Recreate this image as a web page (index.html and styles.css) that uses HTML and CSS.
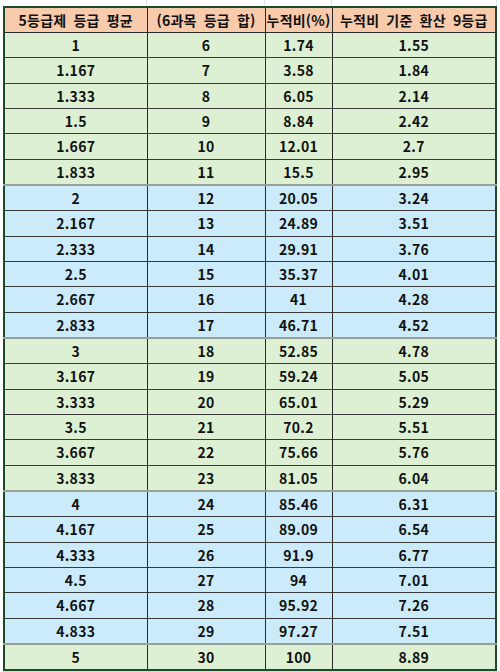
FILE: index.html
```html
<!DOCTYPE html>
<html lang="ko">
<head>
<meta charset="utf-8">
<link rel="stylesheet" href="styles.css">
</head>
<body>
<div class="sheet">
  <div class="ghost ghost-top"><span></span><span></span><span></span><span></span></div>
  <table class="grade">
    <colgroup><col class="c1"><col class="c2"><col class="c3"><col class="c4"></colgroup>
    <thead>
      <tr><th>5등급제 등급 평균</th><th>(6과목 등급 합)</th><th>누적비(%)</th><th>누적비 기준 환산 9등급</th></tr>
    </thead>
    <tbody>
      <tr class="g"><td>1</td><td>6</td><td>1.74</td><td>1.55</td></tr>
      <tr class="g"><td>1.167</td><td>7</td><td>3.58</td><td>1.84</td></tr>
      <tr class="g"><td>1.333</td><td>8</td><td>6.05</td><td>2.14</td></tr>
      <tr class="g"><td>1.5</td><td>9</td><td>8.84</td><td>2.42</td></tr>
      <tr class="g"><td>1.667</td><td>10</td><td>12.01</td><td>2.7</td></tr>
      <tr class="g"><td>1.833</td><td>11</td><td>15.5</td><td>2.95</td></tr>
      <tr class="b sw"><td>2</td><td>12</td><td>20.05</td><td>3.24</td></tr>
      <tr class="b"><td>2.167</td><td>13</td><td>24.89</td><td>3.51</td></tr>
      <tr class="b"><td>2.333</td><td>14</td><td>29.91</td><td>3.76</td></tr>
      <tr class="b"><td>2.5</td><td>15</td><td>35.37</td><td>4.01</td></tr>
      <tr class="b"><td>2.667</td><td>16</td><td>41</td><td>4.28</td></tr>
      <tr class="b"><td>2.833</td><td>17</td><td>46.71</td><td>4.52</td></tr>
      <tr class="g sw"><td>3</td><td>18</td><td>52.85</td><td>4.78</td></tr>
      <tr class="g"><td>3.167</td><td>19</td><td>59.24</td><td>5.05</td></tr>
      <tr class="g"><td>3.333</td><td>20</td><td>65.01</td><td>5.29</td></tr>
      <tr class="g"><td>3.5</td><td>21</td><td>70.2</td><td>5.51</td></tr>
      <tr class="g"><td>3.667</td><td>22</td><td>75.66</td><td>5.76</td></tr>
      <tr class="g"><td>3.833</td><td>23</td><td>81.05</td><td>6.04</td></tr>
      <tr class="b sw"><td>4</td><td>24</td><td>85.46</td><td>6.31</td></tr>
      <tr class="b"><td>4.167</td><td>25</td><td>89.09</td><td>6.54</td></tr>
      <tr class="b"><td>4.333</td><td>26</td><td>91.9</td><td>6.77</td></tr>
      <tr class="b"><td>4.5</td><td>27</td><td>94</td><td>7.01</td></tr>
      <tr class="b"><td>4.667</td><td>28</td><td>95.92</td><td>7.26</td></tr>
      <tr class="b"><td>4.833</td><td>29</td><td>97.27</td><td>7.51</td></tr>
      <tr class="g sw"><td>5</td><td>30</td><td>100</td><td>8.89</td></tr>
    </tbody>
  </table>
  <div class="ghost ghost-bottom"><span></span><span></span><span></span><span></span></div>
</div>
</body>
</html>
```
FILE: styles.css
```css
html, body {
  margin: 0;
  padding: 0;
  background: #ffffff;
}
.sheet {
  width: 500px;
  height: 672px;
  overflow: hidden;
  padding-left: 3px;
  box-sizing: border-box;
}
.ghost {
  display: grid;
  grid-template-columns: 144px 118px 67px 165px;
}
.ghost span {
  border-right: 1px solid #e3e3e3;
}
.ghost-top {
  height: 6px;
}
.ghost-bottom {
  height: 10px;
  border-top: 1px solid #d8d8d8;
}
.grade {
  border-collapse: collapse;
  table-layout: fixed;
  width: 494px;
  border: 2px solid #1d4a2a;
  font-family: "Noto Sans CJK KR", "Noto Sans", sans-serif;
  font-weight: 700;
  font-size: 14px;
  color: #111;
}
.c1 { width: 143px; }
.c2 { width: 118px; }
.c3 { width: 67px; }
.c4 { width: 164px; }
.grade th, .grade td {
  text-align: center;
  padding: 0;
  line-height: 1;
  white-space: nowrap;
  border-left: 1px solid #2a2a2a;
  border-right: 1px solid #2a2a2a;
}
.grade th {
  background: #f8cbad;
  height: 24px;
  font-size: 14px;
  word-spacing: 3px;
  border-bottom: 1px solid #2a2a2a;
  letter-spacing: 0.2px;
}
.grade td {
  height: 24.33px;
  letter-spacing: 0.3px;
  border-top: 1px solid #3a3a3a;
}
.grade tr.g td { background: #ddf0d3; }
.grade tr.b td { background: #ccebfa; }
.grade tr.sw td { border-top: 2px solid #98a098; }
```
